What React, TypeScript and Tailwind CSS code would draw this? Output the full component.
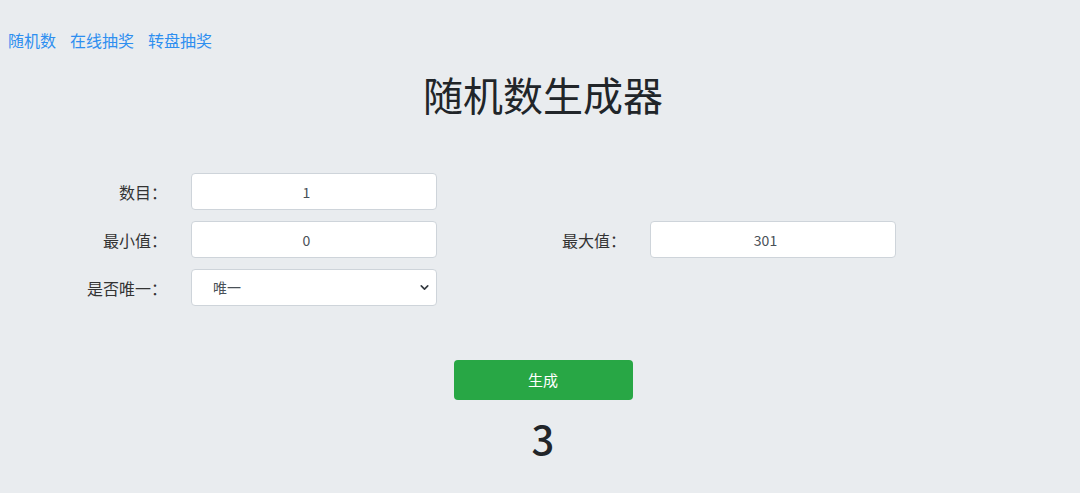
import { ChevronDown } from "lucide-react";

const font = { fontFamily: '"Noto Sans CJK SC", "Noto Sans", sans-serif' };

const inputCls = "w-[246px] h-[37px] bg-white border border-[#ced4da] rounded-[4px] text-center text-[14px] text-[#495057] outline-none";
const labelCls = "w-[191px] pr-[24px] text-right text-[16px] text-[#333]";

function Field({ label, value }: { label: string, value: string }) {
  return (
    <div className="flex items-center">
      <label className={labelCls}>{label}</label>
      <input type="number" defaultValue={value} className={inputCls} />
    </div>
  )
}

export default function App() {
  return (
    <div className="min-h-[493px] w-full bg-[#e9ecef]" style={font}>
      <nav className="flex gap-[14px] pl-[8px] pt-[28px] text-[16px] leading-[24px] text-[#2e8ff0]">
        <a href="#">随机数</a>
        <a href="#">在线抽奖</a>
        <a href="#">转盘抽奖</a>
      </nav>

      <h1 className="mt-[18px] pl-[6px] text-center text-[40px] leading-[48px] text-[#212529]">随机数生成器</h1>

      <div className="mt-[55px] flex flex-col gap-[11px]">
        <Field label="数目：" value="1" />
        <div className="flex">
          <Field label="最小值：" value="0" />
          <div className="flex items-center ml-[22px]">
            <label className={labelCls}>最大值：</label>
            <input type="number" defaultValue="301" className={inputCls} />
          </div>
        </div>
        <div className="flex items-center">
          <label className={labelCls}>是否唯一：</label>
          <div className="relative">
            <select className="appearance-none w-[246px] h-[37px] bg-white border border-[#ced4da] rounded-[4px] pl-[21px] text-[14px] text-[#495057] outline-none">
              <option>唯一</option>
              <option>不唯一</option>
            </select>
            <ChevronDown size={13} strokeWidth={3} className="absolute right-[6px] top-[12px] text-[#343a40] pointer-events-none" />
          </div>
        </div>
      </div>

      <div className="mt-[54px] pl-[6px] flex flex-col items-center">
        <button className="w-[179px] h-[40px] rounded-[4px] bg-[#28a745] text-white text-[15px]">生成</button>
        <div className="mt-[14px] text-[40px] leading-[48px] font-medium text-[#212529]">3</div>
      </div>
    </div>
  )
}
